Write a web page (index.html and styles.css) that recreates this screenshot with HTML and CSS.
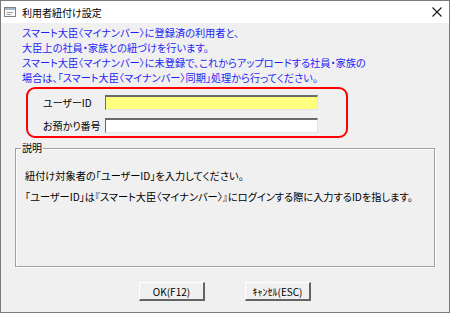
FILE: index.html
```html
<!DOCTYPE html>
<html lang="ja">
  <head>
    <meta charset="UTF-8" />
    <title>利用者紐付け設定</title>
    <link rel="stylesheet" href="styles.css">
  </head>
  <body>
    <div class="window">
      <div class="titlebar">
        <svg class="app-icon" width="12" height="10" viewBox="0 0 12 10">
          <rect x="0.5" y="0.5" width="11" height="9" fill="#fff" stroke="#808080" />
          <rect x="1" y="1" width="10" height="2" fill="#a8b8c8" />
          <line x1="2.5" y1="5.5" x2="9.5" y2="5.5" stroke="#a0a0a0" />
          <line x1="2.5" y1="7.5" x2="7.5" y2="7.5" stroke="#a0a0a0" />
        </svg>
        <span class="title">利用者紐付け設定</span>
        <svg class="close" width="10" height="10" viewBox="0 0 10 10">
          <path d="M0.5 0.5 L9.5 9.5 M9.5 0.5 L0.5 9.5" stroke="#1a1a1a" stroke-width="1.1" />
        </svg>
      </div>

      <div class="body">
        <div class="notice">
          <p>スマート大臣〈マイナンバー〉に登録済の利用者と、</p>
          <p>大臣上の社員・家族との紐づけを行います。</p>
          <p>スマート大臣〈マイナンバー〉に未登録で、これからアップロードする社員・家族の</p>
          <p>場合は、「スマート大臣〈マイナンバー〉同期」処理から行ってください。</p>
        </div>

        <div class="fields">
          <div class="field">
            <label class="field-label">ユーザーID</label>
            <div class="input input-yellow"></div>
          </div>
          <div class="field">
            <label class="field-label">お預かり番号</label>
            <div class="input"></div>
          </div>
        </div>

        <fieldset class="group">
          <legend>説明</legend>
          <p>紐付け対象者の「ユーザーID」を入力してください。</p>
          <p>「ユーザーID」は『スマート大臣〈マイナンバー〉』にログインする際に入力するIDを指します。</p>
        </fieldset>

        <div class="buttons">
          <button class="btn">OK(F12)</button>
          <button class="btn">ｷｬﾝｾﾙ(ESC)</button>
        </div>
      </div>
    </div>
  </body>
</html>
```
FILE: styles.css
```css
body {
  margin: 0;
  font-family: "Noto Sans CJK JP", "DejaVu Sans", sans-serif;
  font-size: 10px;
  font-feature-settings: "palt";
  color: #000;
  background: #fff;
}

.window {
  width: 450px;
  height: 313px;
  box-sizing: border-box;
  border: 1px solid #7a7a7a;
  display: flex;
  flex-direction: column;
  background: #f0f0f0;
}

.titlebar {
  height: 22px;
  background: #fff;
  display: flex;
  align-items: center;
  padding-left: 3px;
  flex-shrink: 0;
}

.app-icon {
  margin-right: 6px;
}

.title {
  flex: 1;
  font-size: 10px;
  color: #000;
}

.close {
  margin-right: 7px;
}

.body {
  flex: 1;
  display: flex;
  flex-direction: column;
}

.notice {
  color: #1f1ff5;
  padding: 2px 0 0 21px;
}

.notice p {
  margin: 0;
  font-size: 10.2px;
  line-height: 15px;
  white-space: nowrap;
}

.fields {
  margin: 2px 0 0 25px;
  width: 303px;
  height: 41px;
  border: 2px solid #ff0000;
  border-radius: 9px;
  padding: 6px 0 0 15px;
  display: flex;
  flex-direction: column;
  gap: 8px;
}

.field {
  display: flex;
  align-items: center;
  height: 15px;
}

.field-label {
  width: 62px;
  white-space: nowrap;
}

.input {
  width: 211px;
  height: 12px;
  border-top: 2px solid #6a6a6a;
  border-left: 1px solid #6a6a6a;
  border-right: 1px solid #e3e3e3;
  border-bottom: 1px solid #e3e3e3;
  background: #fff;
}

.input-yellow {
  background: #ffff80;
}

.group {
  box-sizing: border-box;
  margin: 4px 14px 0 14px;
  height: 125px;
  border: 1px solid #a0a0a0;
  box-shadow: inset 1px 1px 0 #fff, 1px 1px 0 #fff;
  padding: 16px 0 0 9px;
  min-width: 0;
}

.group legend {
  padding: 0 1px;
  margin-left: -4px;
  line-height: 12px;
}

.group p {
  margin: 0 0 9px 0;
  font-size: 10.2px;
  line-height: 12px;
  white-space: nowrap;
}

.buttons {
  display: flex;
  justify-content: center;
  gap: 40px;
  margin-top: 15px;
}

.btn {
  width: 66px;
  height: 19px;
  padding: 0;
  font-family: inherit;
  font-size: 10px;
  font-feature-settings: "palt";
  background: #f0f0f0;
  border: none;
  border-top: 1px solid #fff;
  border-left: 1px solid #fff;
  border-right: 2px solid #646464;
  border-bottom: 2px solid #646464;
  color: #000;
}
```
